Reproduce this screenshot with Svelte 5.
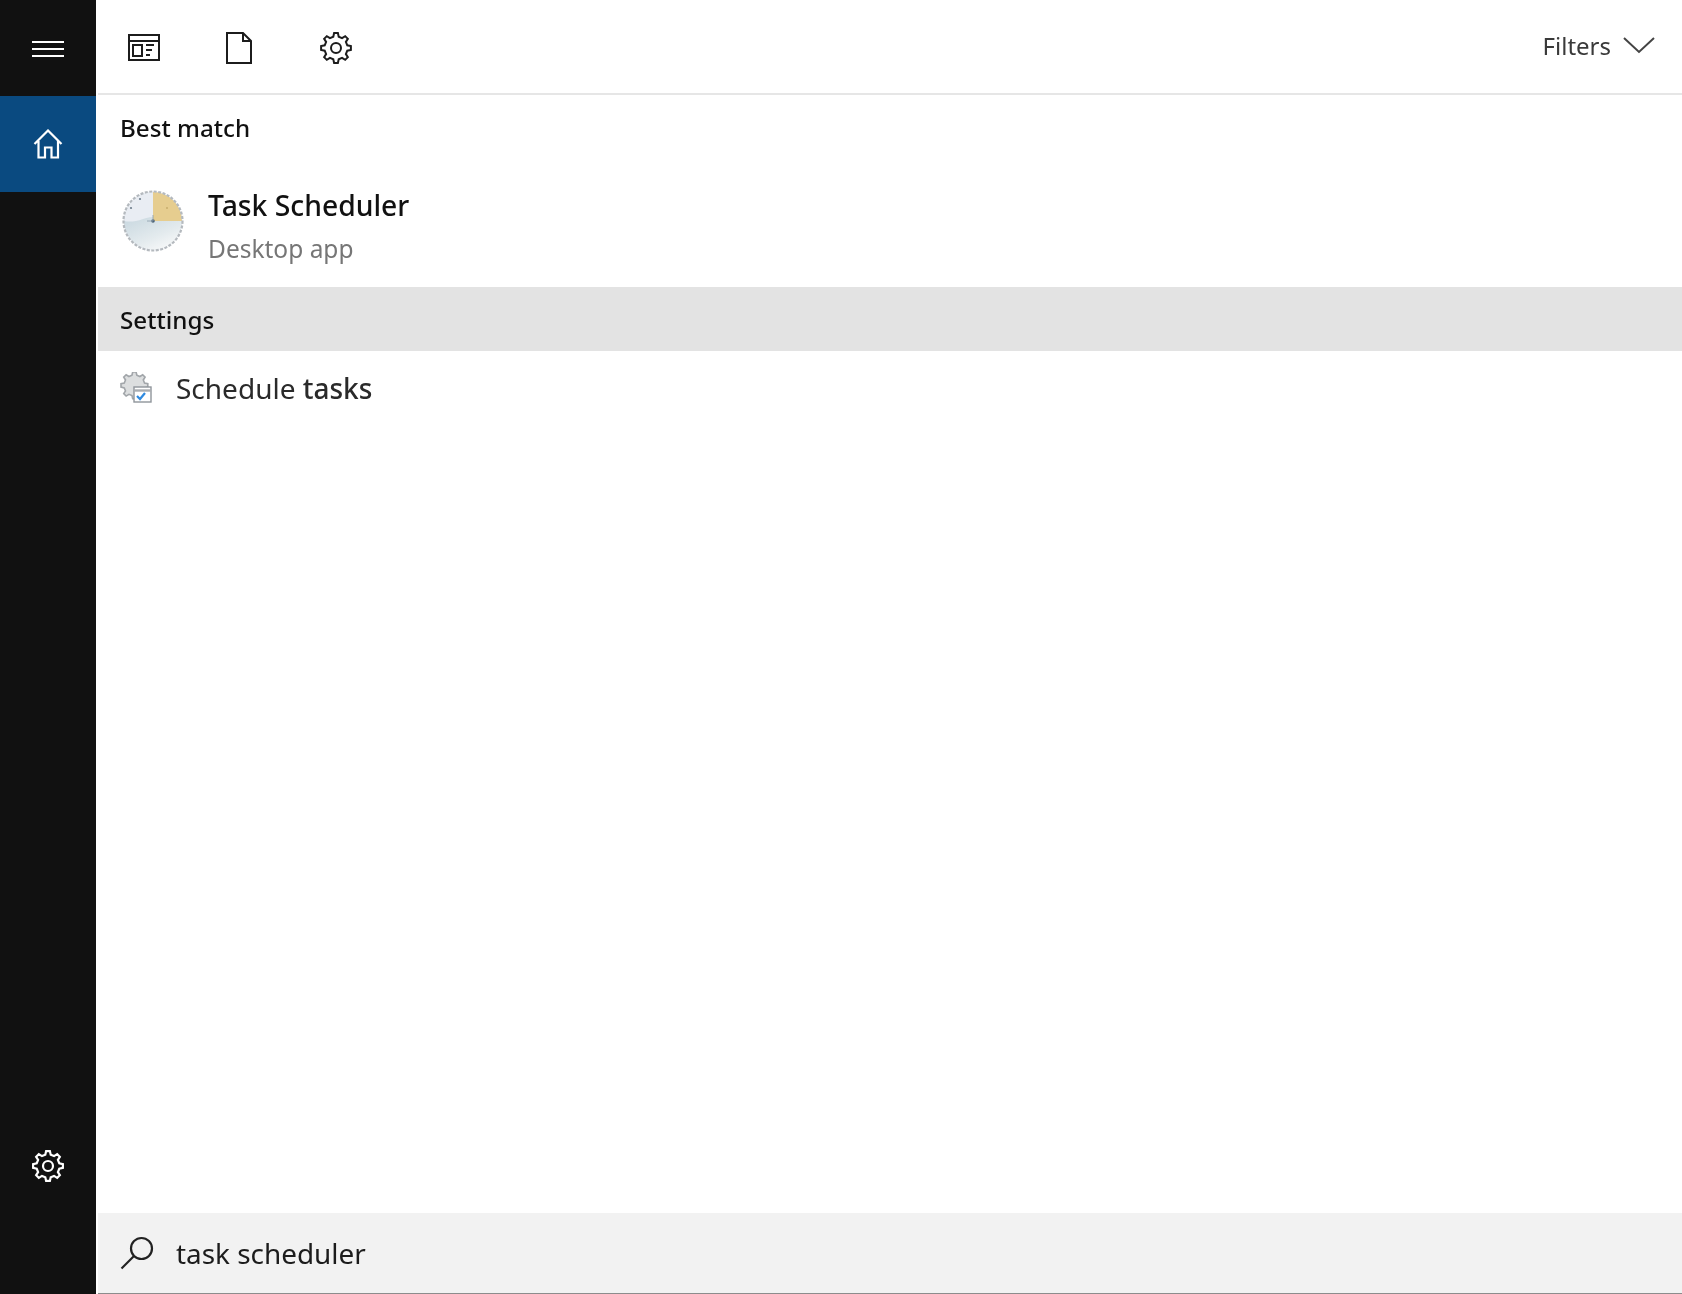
<script>
  function gearPath(cx, cy, rOut, rIn, teeth) {
    const pts = [];
    const step = (Math.PI * 2) / teeth;
    for (let i = 0; i < teeth; i++) {
      const a = i * step - Math.PI / 2;
      const w = step * 0.2;
      const w2 = step * 0.3;
      const p = (r, t) => `${(cx + r * Math.cos(t)).toFixed(2)} ${(cy + r * Math.sin(t)).toFixed(2)}`;
      pts.push(p(rIn, a - w2), p(rOut, a - w * 0.8), p(rOut, a + w * 0.8), p(rIn, a + w2));
    }
    return 'M' + pts.join('L') + 'Z';
  }
  const gear = gearPath(16, 16, 15, 11.6, 8);
</script>

<div class="root">
  <nav class="rail">
    <div class="rail-top">
      <svg class="burger" viewBox="0 0 32 18" width="32" height="18"><path d="M0 2h32M0 9h32M0 16h32" /></svg>
    </div>
    <div class="rail-home">
      <svg viewBox="0 0 30 30" width="30" height="30"><path d="M1.500 15 15 1.500 28.500 15M5.500 12v16.500h6.500v-10h6.500v10h6.500V12" /></svg>
    </div>
    <div class="rail-spacer"></div>
    <div class="rail-gear">
      <svg viewBox="0 0 32 32" width="32" height="32"><path d={gear} /><circle cx="16" cy="16" r="5" /></svg>
    </div>
  </nav>

  <main class="panel">
    <header class="top">
      <div class="tabs">
        <svg class="tab-apps" viewBox="0 0 32 28" width="32" height="28">
          <path d="M1 1h30v25H1zM1 7h30M5 11h9v11H5zM18 11h8M18 16h6M18 21h4" />
        </svg>
        <svg class="tab-doc" viewBox="0 0 26 32" width="26" height="32">
          <path d="M1 1h16l8 8v22H1zM17 1v8h8" />
        </svg>
        <svg class="tab-gear" viewBox="0 0 32 32" width="32" height="32"><path d={gear} /><circle cx="16" cy="16" r="5" /></svg>
      </div>
      <div class="filters">
        <span>Filters</span>
        <svg viewBox="0 0 32 18" width="32" height="18"><path d="M1 2 16 16 31 2" /></svg>
      </div>
    </header>

    <div class="heading best">Best match</div>

    <div class="match">
      <svg class="clock" viewBox="0 0 64 64" width="64" height="64">
        <defs>
          <linearGradient id="lower" x1="0.1" y1="0" x2="0.85" y2="1">
            <stop offset="0" stop-color="#c9d8e0" />
            <stop offset="0.6" stop-color="#e4ebee" />
            <stop offset="1" stop-color="#fbfbfb" />
          </linearGradient>
        </defs>
        <circle cx="32" cy="32" r="29.500" fill="#e9edf3" />
        <path d="M3 32a29 29 0 0 0 58 0C46 28 34 26 22 30 14 33 8 33 3 32z" fill="url(#lower)" />
        <path d="M32 3a29 29 0 0 1 29 29H32z" fill="#e6cd8f" />
        <circle cx="32" cy="32" r="29.500" fill="none" stroke="#b4b9be" stroke-width="2.200" stroke-dasharray="3 1.500" />
        <circle cx="32" cy="32" r="1.800" fill="#4d6478" />
        <path d="M32 26v6h-6" stroke="#8b9cab" stroke-width="0.800" fill="none" />
        <circle cx="19" cy="10" r="1.100" fill="#6f7d8b" />
        <circle cx="10" cy="19" r="1.100" fill="#6f7d8b" />
        <circle cx="46" cy="19" r="1" fill="#c7ad6c" />
      </svg>
      <div class="match-text">
        <div class="title">Task Scheduler</div>
        <div class="sub">Desktop app</div>
      </div>
    </div>

    <div class="heading settings">Settings</div>

    <div class="row">
      <svg class="setting-icon" viewBox="0 0 32 32" width="32" height="32">
        <path d={gear} transform="translate(0 -1) scale(0.9)" fill="#dcdedf" stroke="#a2a6aa" stroke-width="1.800" />
        <rect x="14" y="15" width="17" height="15" fill="#fff" stroke="#8f959b" stroke-width="1.400" />
        <path d="M14 18.500h17" stroke="#a9adb1" stroke-width="2.400" />
        <path d="M17 24l3 3 5-6" stroke="#2f8ae0" stroke-width="2.200" fill="none" />
      </svg>
      <span class="row-text">Schedule <b>tasks</b></span>
    </div>

    <div class="grow"></div>

    <div class="search">
      <svg viewBox="0 0 34 34" width="34" height="34"><circle cx="21.500" cy="12.500" r="10.500" /><path d="M14 20 1.500 32.500" /></svg>
      <span>task scheduler</span>
    </div>
    <div class="edge"></div>
  </main>
</div>

<style>
  :global(body) {
    margin: 0;
    background: #fff;
  }
  .root {
    display: flex;
    width: 1682px;
    height: 1294px;
    overflow: hidden;
    font-family: "Noto Sans", "Open Sans", sans-serif;
    color: #141414;
    filter: blur(0.5px);
  }
  .rail {
    width: 96px;
    flex: none;
    background: #111;
    display: flex;
    flex-direction: column;
  }
  .rail svg path, .rail svg circle {
    fill: none;
    stroke: #fff;
    stroke-width: 2.200;
  }
  .rail-top {
    height: 96px;
    display: flex;
    align-items: center;
    justify-content: center;
  }
  .rail-home {
    height: 96px;
    background: #0a4a80;
    display: flex;
    align-items: center;
    justify-content: center;
  }
  .rail-spacer { flex: 1; }
  .rail-gear {
    height: 144px;
    display: flex;
    justify-content: center;
  }
  .burger { margin-top: 1px; }
  .panel {
    flex: 1;
    display: flex;
    flex-direction: column;
    min-width: 0;
    padding-left: 2px;
  }
  .top {
    height: 93px;
    flex: none;
    border-bottom: 2px solid #e6e6e6;
    display: flex;
    align-items: center;
    justify-content: space-between;
    padding: 0 27px 0 30px;
  }
  .tabs {
    display: flex;
    align-items: center;
    margin-top: 2px;
  }
  .tabs svg { fill: none; stroke: #1c1c1c; stroke-width: 2; }
  .tabs svg path, .tabs svg circle { fill: none; }
  .tab-doc { margin-left: 66px; }
  .tab-gear { margin-left: 68px; }
  .filters {
    display: flex;
    align-items: center;
    gap: 12px;
    font-size: 24px;
    color: #3a3a3a;
    margin-top: -3px;
  }
  .filters svg { fill: none; stroke: #444; stroke-width: 2; }
  .heading {
    font-size: 24.200px;
    font-weight: 500;
    padding-left: 22px;
    color: #111;
  }
  .best {
    height: 66px;
    line-height: 66px;
  }
  .match {
    height: 126px;
    box-sizing: border-box;
    display: flex;
    align-items: flex-start;
    padding: 24px 0 0 25px;
  }
  .clock { margin-top: 4px; margin-left: -2px; flex: none; }
  .match-text { margin-left: 23px; }
  .title {
    font-size: 28.300px;
    line-height: 40px;
    font-weight: 500;
    color: #111;
  }
  .sub {
    font-size: 24.500px;
    line-height: 34px;
    margin-top: 7px;
    color: #767676;
  }
  .settings {
    height: 64px;
    line-height: 65px;
    background: #e3e3e3;
  }
  .row {
    height: 74px;
    display: flex;
    align-items: center;
    padding-left: 22px;
  }
  .row-text {
    margin-left: 24px;
    font-size: 28px;
    color: #2a2a2a;
  }
  .row-text b { font-weight: 500; }
  .grow { flex: 1; }
  .search {
    height: 80px;
    flex: none;
    background: #f2f2f2;
    display: flex;
    align-items: center;
    padding-left: 22px;
    font-size: 27.900px;
    color: #1c1c1c;
  }
  .search svg { fill: none; stroke: #222; stroke-width: 2.200; }
  .search span { margin-left: 22px; }
  .edge {
    height: 1px;
    flex: none;
    background: #8c8c8c;
  }
</style>
